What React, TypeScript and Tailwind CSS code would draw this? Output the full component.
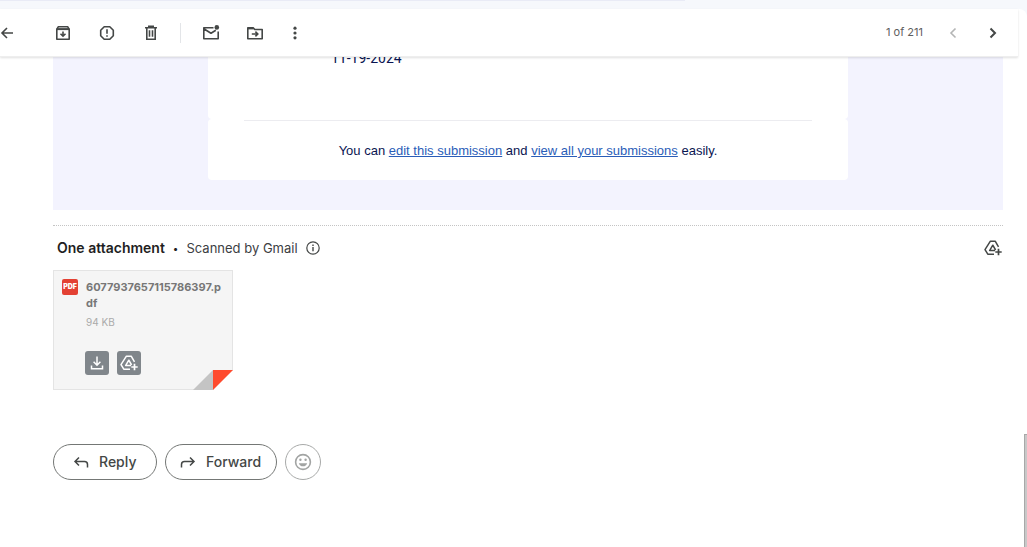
import { ReactNode } from "react";

interface IconProps {
  className?: string;
}

interface IconButtonProps {
  label: string;
  className?: string;
  children: ReactNode;
}

function IconButton({ label, className = "", children }: IconButtonProps) {
  return (
    <button
      type="button"
      aria-label={label}
      className={`flex h-5 shrink-0 items-center justify-center text-[#444746] ${className}`}
    >
      {children}
    </button>
  );
}

function DriveAddIcon({ className }: IconProps) {
  return (
    <svg viewBox="0 0 20 20" className={className} fill="none" stroke="currentColor" strokeWidth="1.5">
      <path d="M11 16.2H4.8L2 11.6 7.4 3.2h4.8l3.3 5.6" strokeLinejoin="round" />
      <path d="M12 12.6H6.6l3.2-5.4 2.8 4.8" strokeLinejoin="round" />
      <path d="M15.5 10.8v6.4M12.3 14h6.4" strokeWidth="1.7" />
    </svg>
  );
}

function Toolbar() {
  return (
    <header className="relative z-10 mr-[9px] flex h-12 items-center border-b border-[#eeeeee] bg-white shadow-[0_1px_2px_rgba(0,0,0,0.12)]">
      <IconButton label="Back to inbox" className="mr-[39px] w-3.5">
        <svg viewBox="0 0 14 14" className="size-3.5" fill="none" stroke="currentColor" strokeWidth="1.6">
          <path d="M13 7H2.5M7 2 2 7l5 5" />
        </svg>
      </IconButton>
      <IconButton label="Archive" className="mr-6 w-5">
        <svg viewBox="0 0 20 20" className="size-5" fill="none" stroke="currentColor" strokeWidth="1.6">
          <path d="M3.8 6.3 5.2 3.8h9.6l1.4 2.5v9.9H3.8z" strokeLinejoin="round" />
          <path d="M3.5 6.1h13" strokeWidth="2" />
          <path d="M10 8.5v4M7.5 10.7 10 13.2l2.5-2.5" />
        </svg>
      </IconButton>
      <IconButton label="Report spam" className="mr-6 w-5">
        <svg viewBox="0 0 20 20" className="size-5" fill="none" stroke="currentColor" strokeWidth="1.6">
          <path d="M7.2 3.7h5.6l3.5 3.5v5.6l-3.5 3.5H7.2l-3.5-3.5V7.2z" strokeLinejoin="round" />
          <path d="M10 6.2v4.6M10 12.2v1.6" />
        </svg>
      </IconButton>
      <IconButton label="Delete" className="w-5">
        <svg viewBox="0 0 20 20" className="size-5" fill="none" stroke="currentColor" strokeWidth="1.6">
          <path d="M4 4.8h12M7.8 4V3.3h4.4V4M5.8 5v11.2h8.4V5M8.5 7.2v6.6M11.5 7.2v6.6" />
        </svg>
      </IconButton>
      <span className="mr-5 ml-[19px] h-5 w-px bg-[#e3e5e8]" />
      <IconButton label="Mark as unread" className="mr-6 w-5">
        <svg viewBox="0 0 20 20" className="size-5" fill="none" stroke="currentColor" strokeWidth="1.6">
          <path d="M12.5 4.8H2.8v10.9h14.4V8.5M2.8 5.8 10 10.3l4.8-3" strokeLinejoin="round" />
          <circle cx="15.8" cy="4.4" r="2.3" fill="currentColor" stroke="none" />
        </svg>
      </IconButton>
      <IconButton label="Move to" className="mr-5 w-5">
        <svg viewBox="0 0 20 20" className="size-5" fill="none" stroke="currentColor" strokeWidth="1.6">
          <path d="M2.8 4.8h5.4l1.6 1.7h7.4v9.2H2.8z" strokeLinejoin="round" />
          <path d="M3 5.6h5.6" />
          <path d="M6.8 11h5.6M10.4 8.6l2.4 2.4-2.4 2.4" />
        </svg>
      </IconButton>
      <IconButton label="More" className="w-5">
        <svg viewBox="0 0 20 20" className="size-5" fill="currentColor">
          <circle cx="10" cy="5.2" r="1.6" />
          <circle cx="10" cy="10" r="1.6" />
          <circle cx="10" cy="14.8" r="1.6" />
        </svg>
      </IconButton>
      <span className="mr-5 ml-auto text-[11px] text-[#5e5e5e]">1 of 211</span>
      <IconButton label="Newer" className="mr-5 w-5">
        <svg viewBox="0 0 20 20" className="size-5" fill="none" stroke="#b4b5b5" strokeWidth="1.6">
          <path d="m12.5 5.5-4.5 4.5 4.5 4.5" />
        </svg>
      </IconButton>
      <IconButton label="Older" className="mr-[15px] w-5">
        <svg viewBox="0 0 20 20" className="size-5" fill="none" stroke="currentColor" strokeWidth="2">
          <path d="m7.5 5.5 4.5 4.5-4.5 4.5" />
        </svg>
      </IconButton>
    </header>
  );
}

function MessageBody() {
  return (
    <section className="bg-[#f3f3fe] pb-[30px]">
      <div className="mx-auto max-w-[640px] text-[#0a1551]">
        <div className="flow-root h-[62px] rounded-b-sm bg-white pl-[123px]">
          <p className="-mt-2 font-[Roboto,sans-serif] text-sm leading-[18px]">11-19-2024</p>
        </div>
        <div className="rounded-sm bg-white px-9 pt-px">
          <p className="border-t border-[#ececf0] pt-5 pb-[19px] text-center font-['Liberation_Sans',Arial,sans-serif] text-[13px] leading-5">
            You can{" "}
            <a href="#edit" className="text-[#2a5db8] underline">
              edit this submission
            </a>{" "}
            and{" "}
            <a href="#submissions" className="text-[#2a5db8] underline">
              view all your submissions
            </a>{" "}
            easily.
          </p>
        </div>
      </div>
    </section>
  );
}

function Attachment() {
  return (
    <article className="relative h-[120px] w-[180px] border border-[#e4e4e4] bg-[#f5f5f5] p-2 text-[#777777]">
      <div className="flex gap-2">
        <span className="flex size-4 shrink-0 items-center justify-center rounded-xs bg-[#e34133] text-[7px] leading-4 font-black text-white">
          PDF
        </span>
        <div className="min-w-0">
          <p className="text-[11px] leading-4 font-bold break-all">6077937657115786397.pdf</p>
          <p className="mt-[3px] text-[10px] leading-4 text-[#aaaaaa]">94 KB</p>
        </div>
      </div>
      <div className="mt-[21px] ml-[23px] flex gap-2">
        <button
          type="button"
          aria-label="Download attachment"
          className="flex size-6 items-center justify-center rounded-[3px] bg-[#80868b] text-white"
        >
          <svg viewBox="0 0 20 20" className="size-5" fill="none" stroke="currentColor" strokeWidth="1.5">
            <path d="M10 3.5v8.3M6.6 8.8l3.4 3.4 3.4-3.4M4.5 12.5v3.2h11v-3.2" />
          </svg>
        </button>
        <button
          type="button"
          aria-label="Add attachment to Drive"
          className="flex size-6 items-center justify-center rounded-[3px] bg-[#80868b] text-white"
        >
          <DriveAddIcon className="size-5" />
        </button>
      </div>
      <svg viewBox="0 0 40 20" className="absolute -right-px -bottom-px h-5 w-10">
        <path d="M20 20 40 0v20z" fill="#ffffff" />
        <path d="M0 20 20 0v20z" fill="#c4c4c4" />
        <path d="M20 0h20L20 20z" fill="#ff4b2e" />
      </svg>
    </article>
  );
}

function ReplyBar() {
  return (
    <div className="mt-[54px] flex gap-2 text-sm font-medium text-[#444746]">
      <button
        type="button"
        className="flex h-9 w-[104px] items-center gap-2 rounded-full border border-[#747775] pl-[17px]"
      >
        <svg viewBox="0 0 20 20" className="size-5" fill="none" stroke="currentColor" strokeWidth="1.5">
          <path d="M8 5.5 4 9.5l4 4M4 9.5h9.5q3 0 3 3v3" />
        </svg>
        Reply
      </button>
      <button
        type="button"
        className="flex h-9 w-28 items-center gap-2 rounded-full border border-[#747775] pl-3"
      >
        <svg viewBox="0 0 20 20" className="size-5" fill="none" stroke="currentColor" strokeWidth="1.5">
          <path d="m12 5.5 4 4-4 4M16 9.5H6.5q-3 0-3 3v3" />
        </svg>
        Forward
      </button>
      <button
        type="button"
        aria-label="Add reaction"
        className="flex size-9 items-center justify-center rounded-full border border-[#a8aaa9] text-[#a2a4a3]"
      >
        <svg viewBox="0 0 20 20" className="size-5" fill="none" stroke="currentColor" strokeWidth="1.6">
          <circle cx="10" cy="10" r="7.4" />
          <path d="M5.8 11.2h8.4a4.4 4.4 0 0 1-8.4 0z" fill="currentColor" stroke="none" />
          <circle cx="7.4" cy="7.8" r="1.2" fill="currentColor" stroke="none" />
          <circle cx="12.6" cy="7.8" r="1.2" fill="currentColor" stroke="none" />
        </svg>
      </button>
    </div>
  );
}

export default function App() {
  return (
    <div className="min-h-screen bg-[#f6f8fc] font-[Inter,sans-serif]">
      <div className="h-[9px]">
        <div className="h-px w-2/3 bg-[#e9ebf6]" />
      </div>
      <div className="min-h-[calc(100vh-9px)] rounded-tr-lg bg-white">
        <Toolbar />
        <main className="mr-6 ml-[53px]">
          <MessageBody />
          <section className="mt-[15px] border-t border-dotted border-[#c4c4c4]">
            <div className="flex h-11 items-center pl-1 text-sm text-[#1f1f1f]">
              <h2 className="font-semibold">One attachment</h2>
              <span className="mx-2 text-[10px]">•</span>
              <span className="text-[13px] text-[#3c4043]">Scanned by Gmail</span>
              <IconButton label="About attachment scanning" className="ml-[7px] w-4">
                <svg viewBox="0 0 16 16" className="size-4" fill="none" stroke="currentColor" strokeWidth="1.2">
                  <circle cx="8" cy="8" r="6.2" />
                  <path d="M8 7v4.3M8 4.5v1.4" strokeWidth="1.4" />
                </svg>
              </IconButton>
              <IconButton label="Add all to Drive" className="ml-auto w-5">
                <DriveAddIcon className="size-5" />
              </IconButton>
            </div>
            <Attachment />
          </section>
          <ReplyBar />
        </main>
      </div>
      <div className="fixed right-0 bottom-0 h-[113px] w-[3px] border-t border-l border-[#a8a8a8] bg-[#c8c8c8]" />
    </div>
  );
}
